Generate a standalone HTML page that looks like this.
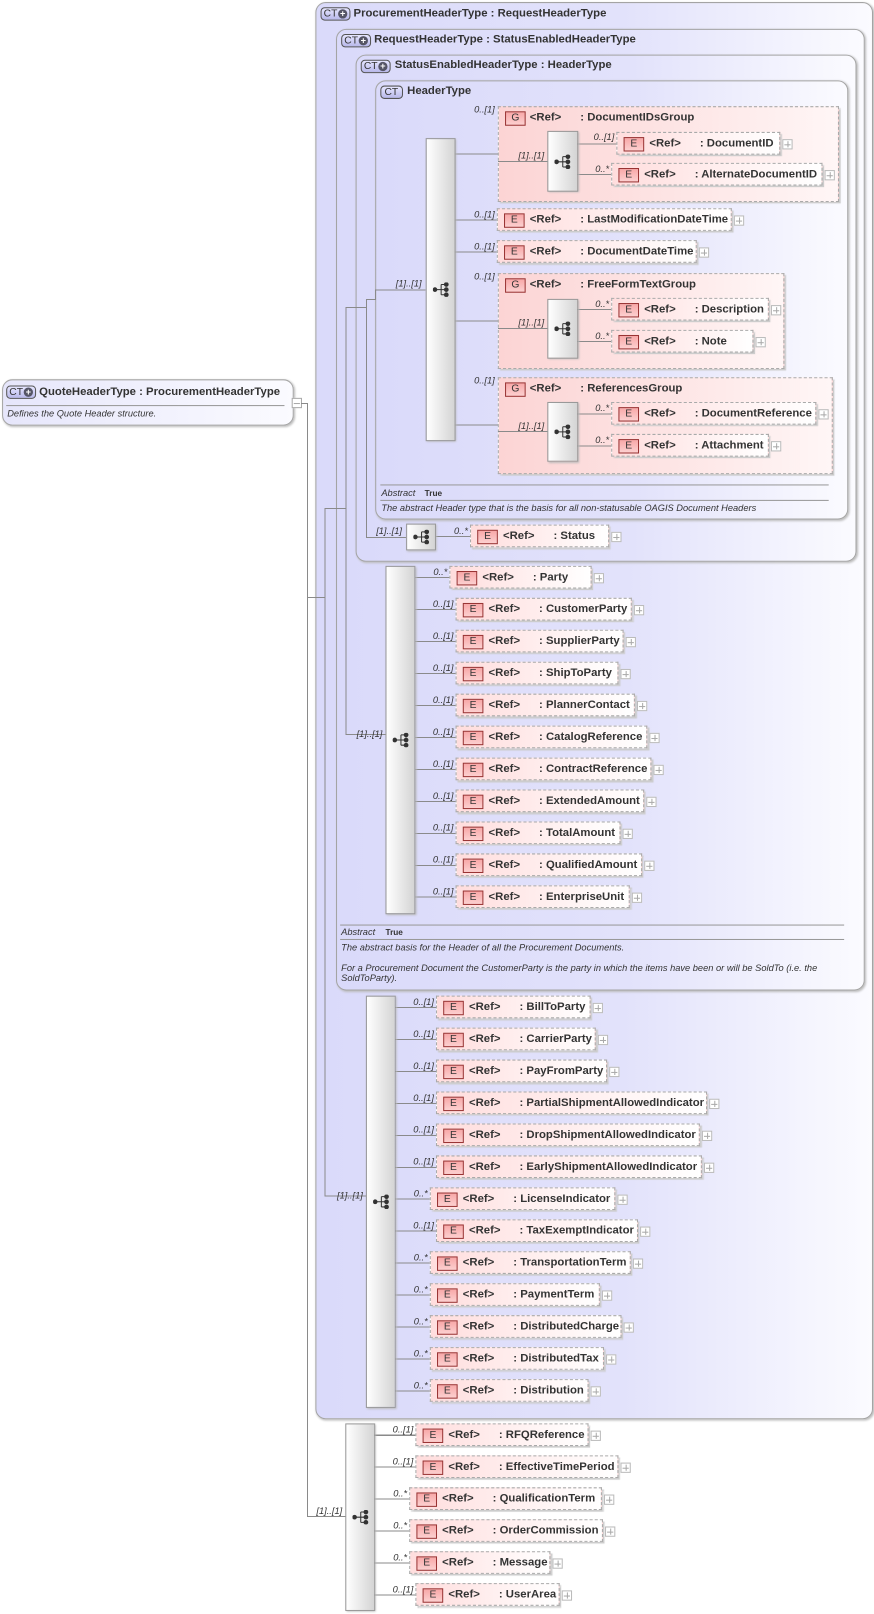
<!DOCTYPE html>
<html><head><meta charset="utf-8"><style>
body{margin:0;background:#fff;width:874px;height:1614px;overflow:hidden}
#w{position:absolute;left:0;top:0;width:848px;height:1566px;transform:scale(1.0307);transform-origin:0 0;font-family:"Liberation Sans",sans-serif;color:#333}
.ct{position:absolute;border:1px solid #a4a4a4;border-radius:10px;background:linear-gradient(90deg,#dadafa 0%,#e2e2fb 55%,#fbfbff 100%);box-shadow:1px 1px 2px #bbb}
.t{position:absolute;font-size:11px;font-weight:bold;white-space:nowrap;line-height:13px}
.bdg{position:absolute;height:11px;border:1px solid #555;border-radius:4px;background:linear-gradient(#e6e6ff,#b8b8ea);font-size:10px;line-height:11px;padding-left:2px;color:#333;box-sizing:content-box}
.bdg .p{position:absolute;right:2px;top:1px;width:9px;height:9px;border-radius:50%;background:#556;color:#fff;font-size:9px;line-height:9px;text-align:center;font-weight:bold}
.e,.g{position:absolute;height:22px;border:1px dashed #aaa;background:linear-gradient(90deg,#fdd 0%,#fee 50%,#fff 100%);box-shadow:2px 2px 1px #ccc;box-sizing:border-box}
.g{background:linear-gradient(90deg,#fcd4d4 0%,#fde4e4 50%,#fff6f6 100%);border:1.5px dashed #aaa}
.bd{position:absolute;left:6px;top:4px;width:18px;height:12px;border:1px solid #933;background:linear-gradient(#f8a8a8,#fcd0d0);font-size:10px;line-height:12px;text-align:center;font-weight:normal;color:#333}
.r,.n{position:absolute;top:4px;font-size:11px;font-weight:bold;white-space:nowrap;line-height:13px}
.r{left:31px}.n{left:80px}
.pl{position:absolute;right:-13px;top:6px;width:8px;height:8px;border:1px solid #bbb;background:#fff}
.pl:before{content:"";position:absolute;left:1px;top:3.5px;width:6px;height:1px;background:#aaa}
.pl:after{content:"";position:absolute;left:3.5px;top:1px;width:1px;height:6px;background:#aaa}
.c{position:absolute;width:32px;text-align:right;font-size:9px;font-style:italic;white-space:nowrap;line-height:10px}
.sq{position:absolute;border:1px solid #999;background:linear-gradient(90deg,#fff,#d4d4d4);box-shadow:1px 1px 2px #bbb;box-sizing:border-box}
.sq svg{position:absolute;left:50%;top:50%;margin:-7px 0 0 -8px}
.ab{position:absolute;font-size:9px;font-style:italic;white-space:nowrap;line-height:10px}
.hl{position:absolute;height:1px;background:#999}
</style></head><body><div id="w">

<div class="ct" style="left:2px;top:368px;width:281px;height:43px;background:linear-gradient(90deg,#e6e6fb,#fbfbff)"></div>
<div class="bdg" style="left:6px;top:374px;width:25px">CT<span class="p">+</span></div>
<div class="t" style="left:38px;top:374px">QuoteHeaderType : ProcurementHeaderType</div>
<div class="hl" style="left:6px;top:393px;width:270px"></div>
<div class="ab" style="left:7px;top:396px">Defines the Quote Header structure.</div>
<div style="position:absolute;left:283px;top:386px;width:8px;height:8px;border:1px solid #aaa;background:#fff"><div style="position:absolute;left:1px;top:3.5px;width:6px;height:1px;background:#aaa"></div></div>

<div class="ct" style="left:306px;top:2px;width:539px;height:1373px"></div>
<div class="bdg" style="left:311px;top:7px;width:25px">CT<span class="p">+</span></div>
<div class="t" style="left:343px;top:7px">ProcurementHeaderType : RequestHeaderType</div>
<div class="ct" style="left:326px;top:28px;width:511px;height:931px"></div>
<div class="bdg" style="left:331px;top:33px;width:25px">CT<span class="p">+</span></div>
<div class="t" style="left:363px;top:32px">RequestHeaderType : StatusEnabledHeaderType</div>
<div class="ct" style="left:345px;top:53px;width:484px;height:490px"></div>
<div class="bdg" style="left:350px;top:58px;width:25px">CT<span class="p">+</span></div>
<div class="t" style="left:383px;top:57px">StatusEnabledHeaderType : HeaderType</div>
<div class="ct" style="left:364px;top:78px;width:457px;height:424px"></div>
<div class="bdg" style="left:369px;top:83px;width:17px;padding-left:3px">CT</div>
<div class="t" style="left:395px;top:82px">HeaderType</div>

<div class="hl" style="left:369px;top:470px;width:435px"></div>
<div class="ab" style="left:370px;top:473px">Abstract</div><div class="t" style="left:412px;top:472px;font-size:8px">True</div>
<div class="hl" style="left:369px;top:485px;width:435px"></div>
<div class="ab" style="left:370px;top:488px">The abstract Header type that is the basis for all non-statusable OAGIS Document Headers</div>

<div class="hl" style="left:330px;top:897px;width:489px"></div>
<div class="ab" style="left:331px;top:899px">Abstract</div><div class="t" style="left:374px;top:898px;font-size:8px">True</div>
<div class="hl" style="left:330px;top:911px;width:489px"></div>
<div class="ab" style="left:331px;top:914px">The abstract basis for the Header of all the Procurement Documents.</div>
<div class="ab" style="left:331px;top:934px">For a Procurement Document the CustomerParty is the party in which the items have been or will be SoldTo (i.e. the</div>
<div class="ab" style="left:331px;top:944px">SoldToParty).</div>

<div class="g" style="left:483px;top:103px;width:331px;height:93px"></div>
<div class="g" style="left:483px;top:265px;width:278px;height:93px"></div>
<div class="g" style="left:483px;top:366px;width:325px;height:94px"></div>

<svg style="position:absolute;left:0;top:0" width="848" height="1566" fill="none" stroke="#8a8a8a" stroke-width="1" shape-rendering="crispEdges">
<path d="M292 391.5H298.5V1471.5H335M298.5 579.5H315.5M315.5 493V1160.5H355M315.5 493.5H335.5M335.5 298V712.5H374M335.5 298.5H355.5M355.5 290V521.5H394M355.5 290.5H364.5V281.5H413"/>
<path d="M441 149.5H483M441 213.5H482M441 244.5H482M441 311.5H483M441 412.5H483"/>
<path d="M483 156.5H531M560 139.5H598M560 169.5H593M483 318.5H531M560 300.5H593M560 331.5H593M483 418.5H531M560 401.5H593M560 432.5H593M422 520.5H456"/>
<path d="M402 560.5H436M402 591.5H442M402 622.5H442M402 653.5H442M402 684.5H442M402 715.5H442M402 746.5H442M402 777.5H442M402 808.5H442M402 839.5H442M402 870.5H442"/>
<path d="M383 977.5H423M383 1008.5H423M383 1039.5H423M383 1070.5H423M383 1101.5H423M383 1132.5H423M383 1163.5H417M383 1194.5H423M383 1225.5H417M383 1256.5H417M383 1287.5H417M383 1318.5H417M383 1349.5H417"/>
<path d="M363 1392.5H403M363 1423.5H403M363 1454.5H397M363 1485.5H397M363 1516.5H397M363 1547.5H403"/>
</svg>

<div class="bd" style="left:490px;top:108px">G</div><div class="r" style="left:514px;top:108px">&lt;Ref&gt;</div><div class="r" style="left:563px;top:108px">: DocumentIDsGroup</div>
<div class="bd" style="left:490px;top:270px">G</div><div class="r" style="left:514px;top:270px">&lt;Ref&gt;</div><div class="r" style="left:563px;top:270px">: FreeFormTextGroup</div>
<div class="bd" style="left:490px;top:371px">G</div><div class="r" style="left:514px;top:371px">&lt;Ref&gt;</div><div class="r" style="left:563px;top:371px">: ReferencesGroup</div>
<div class="c" style="left:448px;top:101px">0..[1]</div>
<div class="c" style="left:448px;top:263px">0..[1]</div>
<div class="c" style="left:448px;top:364px">0..[1]</div>

<div class="sq" style="left:413px;top:134px;width:29px;height:294px"><svg width="16" height="14"><g fill="#333" stroke="#333"><circle cx="2" cy="7" r="1.8"/><path d="M2 7H8M8 2V12M8 2H13M8 7H13M8 12H13" fill="none"/><circle cx="13" cy="2" r="1.8"/><circle cx="13" cy="7" r="1.8"/><circle cx="13" cy="12" r="1.8"/></g></svg></div>
<div class="sq" style="left:531px;top:127px;width:30px;height:59px"><svg width="16" height="14"><g fill="#333" stroke="#333"><circle cx="2" cy="7" r="1.8"/><path d="M2 7H8M8 2V12M8 2H13M8 7H13M8 12H13" fill="none"/><circle cx="13" cy="2" r="1.8"/><circle cx="13" cy="7" r="1.8"/><circle cx="13" cy="12" r="1.8"/></g></svg></div>
<div class="sq" style="left:531px;top:290px;width:30px;height:58px"><svg width="16" height="14"><g fill="#333" stroke="#333"><circle cx="2" cy="7" r="1.8"/><path d="M2 7H8M8 2V12M8 2H13M8 7H13M8 12H13" fill="none"/><circle cx="13" cy="2" r="1.8"/><circle cx="13" cy="7" r="1.8"/><circle cx="13" cy="12" r="1.8"/></g></svg></div>
<div class="sq" style="left:531px;top:390px;width:30px;height:58px"><svg width="16" height="14"><g fill="#333" stroke="#333"><circle cx="2" cy="7" r="1.8"/><path d="M2 7H8M8 2V12M8 2H13M8 7H13M8 12H13" fill="none"/><circle cx="13" cy="2" r="1.8"/><circle cx="13" cy="7" r="1.8"/><circle cx="13" cy="12" r="1.8"/></g></svg></div>
<div class="sq" style="left:394px;top:508px;width:29px;height:26px"><svg width="16" height="14"><g fill="#333" stroke="#333"><circle cx="2" cy="7" r="1.8"/><path d="M2 7H8M8 2V12M8 2H13M8 7H13M8 12H13" fill="none"/><circle cx="13" cy="2" r="1.8"/><circle cx="13" cy="7" r="1.8"/><circle cx="13" cy="12" r="1.8"/></g></svg></div>
<div class="sq" style="left:374px;top:549px;width:29px;height:338px"><svg width="16" height="14"><g fill="#333" stroke="#333"><circle cx="2" cy="7" r="1.8"/><path d="M2 7H8M8 2V12M8 2H13M8 7H13M8 12H13" fill="none"/><circle cx="13" cy="2" r="1.8"/><circle cx="13" cy="7" r="1.8"/><circle cx="13" cy="12" r="1.8"/></g></svg></div>
<div class="sq" style="left:355px;top:966px;width:29px;height:400px"><svg width="16" height="14"><g fill="#333" stroke="#333"><circle cx="2" cy="7" r="1.8"/><path d="M2 7H8M8 2V12M8 2H13M8 7H13M8 12H13" fill="none"/><circle cx="13" cy="2" r="1.8"/><circle cx="13" cy="7" r="1.8"/><circle cx="13" cy="12" r="1.8"/></g></svg></div>
<div class="sq" style="left:335px;top:1381px;width:29px;height:182px"><svg width="16" height="14"><g fill="#333" stroke="#333"><circle cx="2" cy="7" r="1.8"/><path d="M2 7H8M8 2V12M8 2H13M8 7H13M8 12H13" fill="none"/><circle cx="13" cy="2" r="1.8"/><circle cx="13" cy="7" r="1.8"/><circle cx="13" cy="12" r="1.8"/></g></svg></div>

<div class="c" style="left:377px;top:270px">[1]..[1]</div>
<div class="c" style="left:496px;top:146px">[1]..[1]</div>
<div class="c" style="left:496px;top:308px">[1]..[1]</div>
<div class="c" style="left:496px;top:408px">[1]..[1]</div>
<div class="c" style="left:358px;top:510px">[1]..[1]</div>
<div class="c" style="left:339px;top:707px">[1]..[1]</div>
<div class="c" style="left:320px;top:1155px">[1]..[1]</div>
<div class="c" style="left:300px;top:1461px">[1]..[1]</div>

<div class="e" style="left:598px;top:128px;width:159px"><b class="bd">E</b><span class="r">&lt;Ref&gt;</span><span class="n">: DocumentID</span><i class="pl"></i></div><div class="c" style="left:564px;top:128px">0..[1]</div>
<div class="e" style="left:593px;top:158px;width:205px"><b class="bd">E</b><span class="r">&lt;Ref&gt;</span><span class="n">: AlternateDocumentID</span><i class="pl"></i></div><div class="c" style="left:559px;top:159px">0..*</div>
<div class="e" style="left:482px;top:202px;width:228px"><b class="bd">E</b><span class="r">&lt;Ref&gt;</span><span class="n">: LastModificationDateTime</span><i class="pl"></i></div><div class="c" style="left:448px;top:203px">0..[1]</div>
<div class="e" style="left:482px;top:233px;width:194px"><b class="bd">E</b><span class="r">&lt;Ref&gt;</span><span class="n">: DocumentDateTime</span><i class="pl"></i></div><div class="c" style="left:448px;top:234px">0..[1]</div>
<div class="e" style="left:593px;top:289px;width:153px"><b class="bd">E</b><span class="r">&lt;Ref&gt;</span><span class="n">: Description</span><i class="pl"></i></div><div class="c" style="left:559px;top:290px">0..*</div>
<div class="e" style="left:593px;top:320px;width:138px"><b class="bd">E</b><span class="r">&lt;Ref&gt;</span><span class="n">: Note</span><i class="pl"></i></div><div class="c" style="left:559px;top:321px">0..*</div>
<div class="e" style="left:593px;top:390px;width:199px"><b class="bd">E</b><span class="r">&lt;Ref&gt;</span><span class="n">: DocumentReference</span><i class="pl"></i></div><div class="c" style="left:559px;top:391px">0..*</div>
<div class="e" style="left:593px;top:421px;width:153px"><b class="bd">E</b><span class="r">&lt;Ref&gt;</span><span class="n">: Attachment</span><i class="pl"></i></div><div class="c" style="left:559px;top:422px">0..*</div>
<div class="e" style="left:456px;top:509px;width:135px"><b class="bd">E</b><span class="r">&lt;Ref&gt;</span><span class="n">: Status</span><i class="pl"></i></div><div class="c" style="left:422px;top:510px">0..*</div>

<div class="e" style="left:436px;top:549px;width:138px"><b class="bd">E</b><span class="r">&lt;Ref&gt;</span><span class="n">: Party</span><i class="pl"></i></div><div class="c" style="left:402px;top:550px">0..*</div>
<div class="e" style="left:442px;top:580px;width:171px"><b class="bd">E</b><span class="r">&lt;Ref&gt;</span><span class="n">: CustomerParty</span><i class="pl"></i></div><div class="c" style="left:408px;top:581px">0..[1]</div>
<div class="e" style="left:442px;top:611px;width:163px"><b class="bd">E</b><span class="r">&lt;Ref&gt;</span><span class="n">: SupplierParty</span><i class="pl"></i></div><div class="c" style="left:408px;top:612px">0..[1]</div>
<div class="e" style="left:442px;top:642px;width:158px"><b class="bd">E</b><span class="r">&lt;Ref&gt;</span><span class="n">: ShipToParty</span><i class="pl"></i></div><div class="c" style="left:408px;top:643px">0..[1]</div>
<div class="e" style="left:442px;top:673px;width:174px"><b class="bd">E</b><span class="r">&lt;Ref&gt;</span><span class="n">: PlannerContact</span><i class="pl"></i></div><div class="c" style="left:408px;top:674px">0..[1]</div>
<div class="e" style="left:442px;top:704px;width:186px"><b class="bd">E</b><span class="r">&lt;Ref&gt;</span><span class="n">: CatalogReference</span><i class="pl"></i></div><div class="c" style="left:408px;top:705px">0..[1]</div>
<div class="e" style="left:442px;top:735px;width:190px"><b class="bd">E</b><span class="r">&lt;Ref&gt;</span><span class="n">: ContractReference</span><i class="pl"></i></div><div class="c" style="left:408px;top:736px">0..[1]</div>
<div class="e" style="left:442px;top:766px;width:183px"><b class="bd">E</b><span class="r">&lt;Ref&gt;</span><span class="n">: ExtendedAmount</span><i class="pl"></i></div><div class="c" style="left:408px;top:767px">0..[1]</div>
<div class="e" style="left:442px;top:797px;width:160px"><b class="bd">E</b><span class="r">&lt;Ref&gt;</span><span class="n">: TotalAmount</span><i class="pl"></i></div><div class="c" style="left:408px;top:798px">0..[1]</div>
<div class="e" style="left:442px;top:828px;width:181px"><b class="bd">E</b><span class="r">&lt;Ref&gt;</span><span class="n">: QualifiedAmount</span><i class="pl"></i></div><div class="c" style="left:408px;top:829px">0..[1]</div>
<div class="e" style="left:442px;top:859px;width:169px"><b class="bd">E</b><span class="r">&lt;Ref&gt;</span><span class="n">: EnterpriseUnit</span><i class="pl"></i></div><div class="c" style="left:408px;top:860px">0..[1]</div>

<div class="e" style="left:423px;top:966px;width:150px"><b class="bd">E</b><span class="r">&lt;Ref&gt;</span><span class="n">: BillToParty</span><i class="pl"></i></div><div class="c" style="left:389px;top:967px">0..[1]</div>
<div class="e" style="left:423px;top:997px;width:155px"><b class="bd">E</b><span class="r">&lt;Ref&gt;</span><span class="n">: CarrierParty</span><i class="pl"></i></div><div class="c" style="left:389px;top:998px">0..[1]</div>
<div class="e" style="left:423px;top:1028px;width:166px"><b class="bd">E</b><span class="r">&lt;Ref&gt;</span><span class="n">: PayFromParty</span><i class="pl"></i></div><div class="c" style="left:389px;top:1029px">0..[1]</div>
<div class="e" style="left:423px;top:1059px;width:263px"><b class="bd">E</b><span class="r">&lt;Ref&gt;</span><span class="n">: PartialShipmentAllowedIndicator</span><i class="pl"></i></div><div class="c" style="left:389px;top:1060px">0..[1]</div>
<div class="e" style="left:423px;top:1090px;width:256px"><b class="bd">E</b><span class="r">&lt;Ref&gt;</span><span class="n">: DropShipmentAllowedIndicator</span><i class="pl"></i></div><div class="c" style="left:389px;top:1091px">0..[1]</div>
<div class="e" style="left:423px;top:1121px;width:258px"><b class="bd">E</b><span class="r">&lt;Ref&gt;</span><span class="n">: EarlyShipmentAllowedIndicator</span><i class="pl"></i></div><div class="c" style="left:389px;top:1122px">0..[1]</div>
<div class="e" style="left:417px;top:1152px;width:180px"><b class="bd">E</b><span class="r">&lt;Ref&gt;</span><span class="n">: LicenseIndicator</span><i class="pl"></i></div><div class="c" style="left:383px;top:1153px">0..*</div>
<div class="e" style="left:423px;top:1183px;width:196px"><b class="bd">E</b><span class="r">&lt;Ref&gt;</span><span class="n">: TaxExemptIndicator</span><i class="pl"></i></div><div class="c" style="left:389px;top:1184px">0..[1]</div>
<div class="e" style="left:417px;top:1214px;width:195px"><b class="bd">E</b><span class="r">&lt;Ref&gt;</span><span class="n">: TransportationTerm</span><i class="pl"></i></div><div class="c" style="left:383px;top:1215px">0..*</div>
<div class="e" style="left:417px;top:1245px;width:165px"><b class="bd">E</b><span class="r">&lt;Ref&gt;</span><span class="n">: PaymentTerm</span><i class="pl"></i></div><div class="c" style="left:383px;top:1246px">0..*</div>
<div class="e" style="left:417px;top:1276px;width:186px"><b class="bd">E</b><span class="r">&lt;Ref&gt;</span><span class="n">: DistributedCharge</span><i class="pl"></i></div><div class="c" style="left:383px;top:1277px">0..*</div>
<div class="e" style="left:417px;top:1307px;width:169px"><b class="bd">E</b><span class="r">&lt;Ref&gt;</span><span class="n">: DistributedTax</span><i class="pl"></i></div><div class="c" style="left:383px;top:1308px">0..*</div>
<div class="e" style="left:417px;top:1338px;width:154px"><b class="bd">E</b><span class="r">&lt;Ref&gt;</span><span class="n">: Distribution</span><i class="pl"></i></div><div class="c" style="left:383px;top:1339px">0..*</div>

<div class="e" style="left:403px;top:1381px;width:168px"><b class="bd">E</b><span class="r">&lt;Ref&gt;</span><span class="n">: RFQReference</span><i class="pl"></i></div><div class="c" style="left:369px;top:1382px">0..[1]</div>
<div class="e" style="left:403px;top:1412px;width:197px"><b class="bd">E</b><span class="r">&lt;Ref&gt;</span><span class="n">: EffectiveTimePeriod</span><i class="pl"></i></div><div class="c" style="left:369px;top:1413px">0..[1]</div>
<div class="e" style="left:397px;top:1443px;width:187px"><b class="bd">E</b><span class="r">&lt;Ref&gt;</span><span class="n">: QualificationTerm</span><i class="pl"></i></div><div class="c" style="left:363px;top:1444px">0..*</div>
<div class="e" style="left:397px;top:1474px;width:188px"><b class="bd">E</b><span class="r">&lt;Ref&gt;</span><span class="n">: OrderCommission</span><i class="pl"></i></div><div class="c" style="left:363px;top:1475px">0..*</div>
<div class="e" style="left:397px;top:1505px;width:137px"><b class="bd">E</b><span class="r">&lt;Ref&gt;</span><span class="n">: Message</span><i class="pl"></i></div><div class="c" style="left:363px;top:1506px">0..*</div>
<div class="e" style="left:403px;top:1536px;width:140px"><b class="bd">E</b><span class="r">&lt;Ref&gt;</span><span class="n">: UserArea</span><i class="pl"></i></div><div class="c" style="left:369px;top:1537px">0..[1]</div>

</div></body></html>
